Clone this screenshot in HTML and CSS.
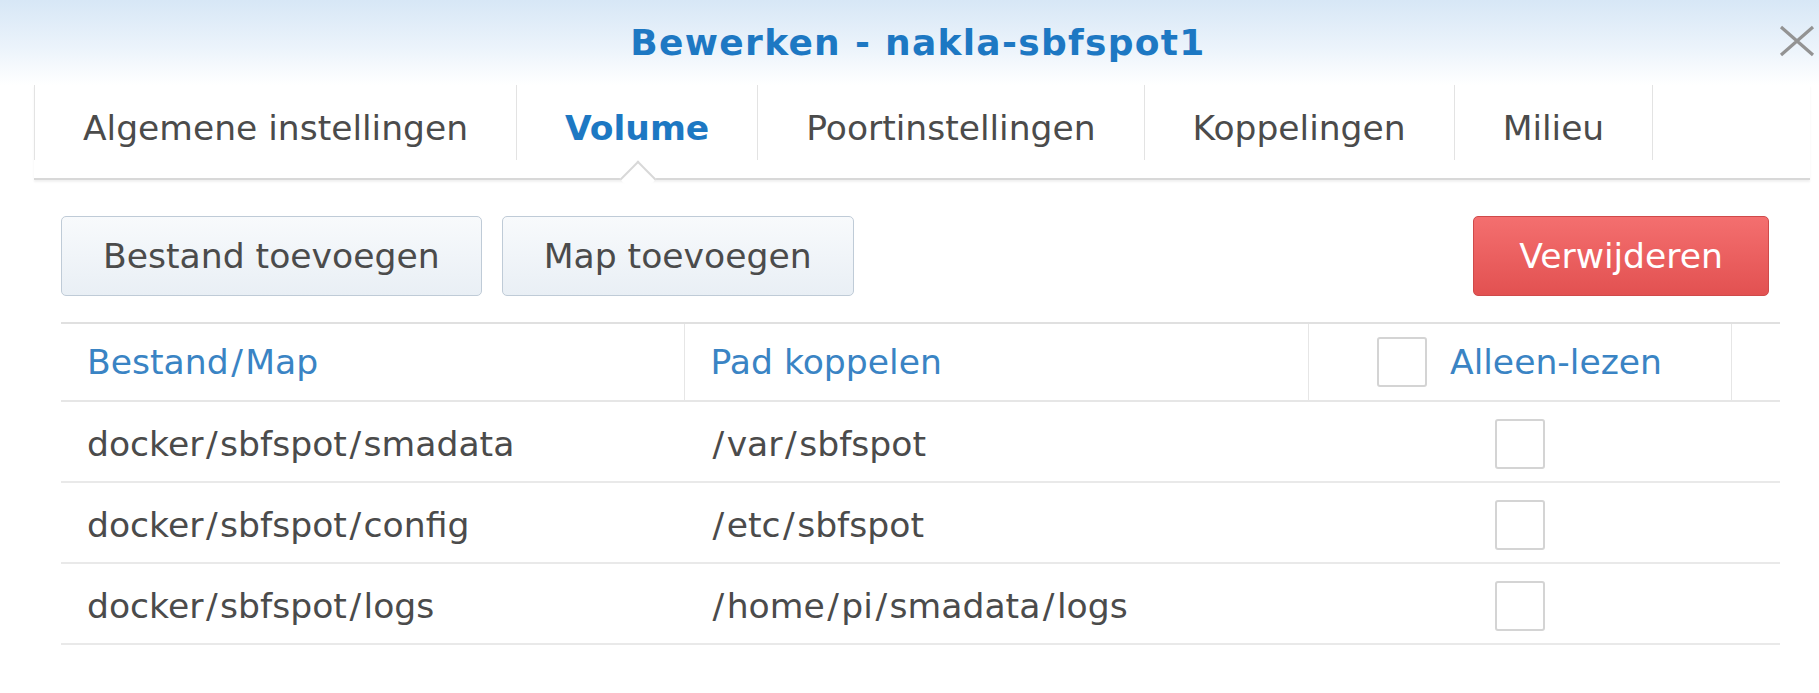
FILE: index.html
```html
<!DOCTYPE html>
<html lang="nl">
<head>
<meta charset="utf-8">
<title>Bewerken - nakla-sbfspot1</title>
<link rel="stylesheet" href="styles.css">
</head>
<body>
<div class="dialog">
  <header class="titlebar">
    <h1 class="title">Bewerken - nakla-sbfspot1</h1>
    <button class="close" aria-label="Sluiten">
      <svg viewBox="0 0 38 32" width="38" height="32"><path d="M3 2 L35 30 M35 2 L3 30" stroke="#939393" stroke-width="3.2" fill="none"/></svg>
    </button>
  </header>
  <nav class="tabs">
    <div class="tab">Algemene instellingen</div>
    <div class="tab active">Volume</div>
    <div class="tab">Poortinstellingen</div>
    <div class="tab">Koppelingen</div>
    <div class="tab">Milieu</div>
  </nav>
  <section class="content">
    <div class="toolbar">
      <button class="btn">Bestand toevoegen</button>
      <button class="btn">Map toevoegen</button>
      <button class="btn danger">Verwijderen</button>
    </div>
    <table class="grid">
      <colgroup>
        <col class="c1"><col class="c2"><col class="c3"><col class="c4">
      </colgroup>
      <thead>
        <tr>
          <th>Bestand<span class="sl">/</span>Map</th>
          <th>Pad koppelen</th>
          <th class="center"><span class="cb"></span><span class="cb-label">Alleen-lezen</span></th>
          <th class="last"></th>
        </tr>
      </thead>
      <tbody>
        <tr><td>docker<span class="sl">/</span>sbfspot<span class="sl">/</span>smadata</td><td><span class="sl">/</span>var<span class="sl">/</span>sbfspot</td><td class="center"><span class="cb"></span></td><td></td></tr>
        <tr><td>docker<span class="sl">/</span>sbfspot<span class="sl">/</span>config</td><td><span class="sl">/</span>etc<span class="sl">/</span>sbfspot</td><td class="center"><span class="cb"></span></td><td></td></tr>
        <tr><td>docker<span class="sl">/</span>sbfspot<span class="sl">/</span>logs</td><td><span class="sl">/</span>home<span class="sl">/</span>pi<span class="sl">/</span>smadata<span class="sl">/</span>logs</td><td class="center"><span class="cb"></span></td><td></td></tr>
      </tbody>
    </table>
  </section>
</div>
</body>
</html>
```
FILE: styles.css
```css
* { box-sizing: border-box; }
html, body { margin: 0; padding: 0; background: #ffffff; }
body {
  font-family: "DejaVu Sans", Verdana, sans-serif;
  color: #4b4b4b;
}
.dialog { width: 1819px; height: 693px; overflow: hidden; background: #fff; }

.titlebar {
  height: 85px;
  padding-left: 17px;
  display: grid;
  grid-template-columns: 1fr auto 1fr;
  align-items: center;
  background: linear-gradient(#d7e7f6 0%, #ebf3fb 55%, #ffffff 100%);
}
.title {
  grid-column: 2;
  margin: 0;
  font-size: 36px;
  font-weight: bold;
  letter-spacing: 1.3px;
  color: #1d78c3;
  white-space: nowrap;
}
.close {
  grid-column: 3;
  justify-self: end;
  align-self: start;
  margin: 25px 3px 0 0;
  padding: 0;
  width: 38px;
  height: 32px;
  border: 0;
  background: none;
}
.close svg { display: block; }

.tabs {
  display: flex;
  height: 95px;
  margin: 0 9px 0 34px;
  border-bottom: 2px solid #d8d8d8;
  box-shadow: 0 2px 2px rgba(0, 0, 0, 0.06);
}
.tab {
  height: 75px;
  padding: 10px 48px 0;
  display: flex;
  align-items: center;
  font-size: 34.5px;
  color: #4b4b4b;
  border-left: 1px solid #e3e3e3;
  white-space: nowrap;
}
.tab:last-child { border-right: 1px solid #e3e3e3; }
.tab.active {
  position: relative;
  font-weight: bold;
  color: #1d78c3;
}
.tab.active::after {
  content: "";
  position: absolute;
  left: calc(50% - 12px);
  top: 81px;
  width: 24px;
  height: 24px;
  background: #fff;
  border-top: 2px solid #d8d8d8;
  border-left: 2px solid #d8d8d8;
  transform: rotate(45deg);
}

.content { padding: 36px 39px 0 61px; }

.toolbar {
  display: flex;
  gap: 20px;
  margin-right: 11px;
}
.btn {
  height: 80px;
  padding: 0 41px;
  font-family: inherit;
  font-size: 34.6px;
  color: #4b4b4b;
  border: 1px solid #bfcbd7;
  border-radius: 5px;
  background: linear-gradient(#f8fafc, #e9eff5);
}
.btn.danger {
  margin-left: auto;
  padding: 0 45px;
  color: #ffffff;
  border-color: #cf4a4a;
  background: linear-gradient(#f46f6f, #e25151);
}

.grid {
  margin-top: 26px;
  width: 1719px;
  border-collapse: collapse;
  table-layout: fixed;
  font-size: 34.6px;
}
.c1 { width: 623px; }
.c2 { width: 624px; }
.c3 { width: 423px; }
.c4 { width: 49px; }
.grid thead tr { border-top: 2px solid #e0e0e0; border-bottom: 2px solid #e6e6e6; }
.grid th {
  height: 78px;
  padding: 0 0 0 26px;
  text-align: left;
  font-weight: normal;
  color: #3a84c4;
  border-right: 1px solid #e6e6e6;
  white-space: nowrap;
}
.grid th.last { border-right: 0; }
.grid tbody tr { border-bottom: 2px solid #e9e9e9; }
.grid td {
  height: 81px;
  padding: 4px 0 0 26px;
  white-space: nowrap;
}
.grid .center { text-align: center; padding-left: 0; padding-right: 0; }
.sl { margin: 0 2.5px; }
.cb {
  display: inline-block;
  width: 50px;
  height: 50px;
  vertical-align: middle;
  border: 2px solid #d4d4d4;
  border-radius: 3px;
  background: #fff;
}
.cb-label { margin-left: 23px; vertical-align: middle; }
```
